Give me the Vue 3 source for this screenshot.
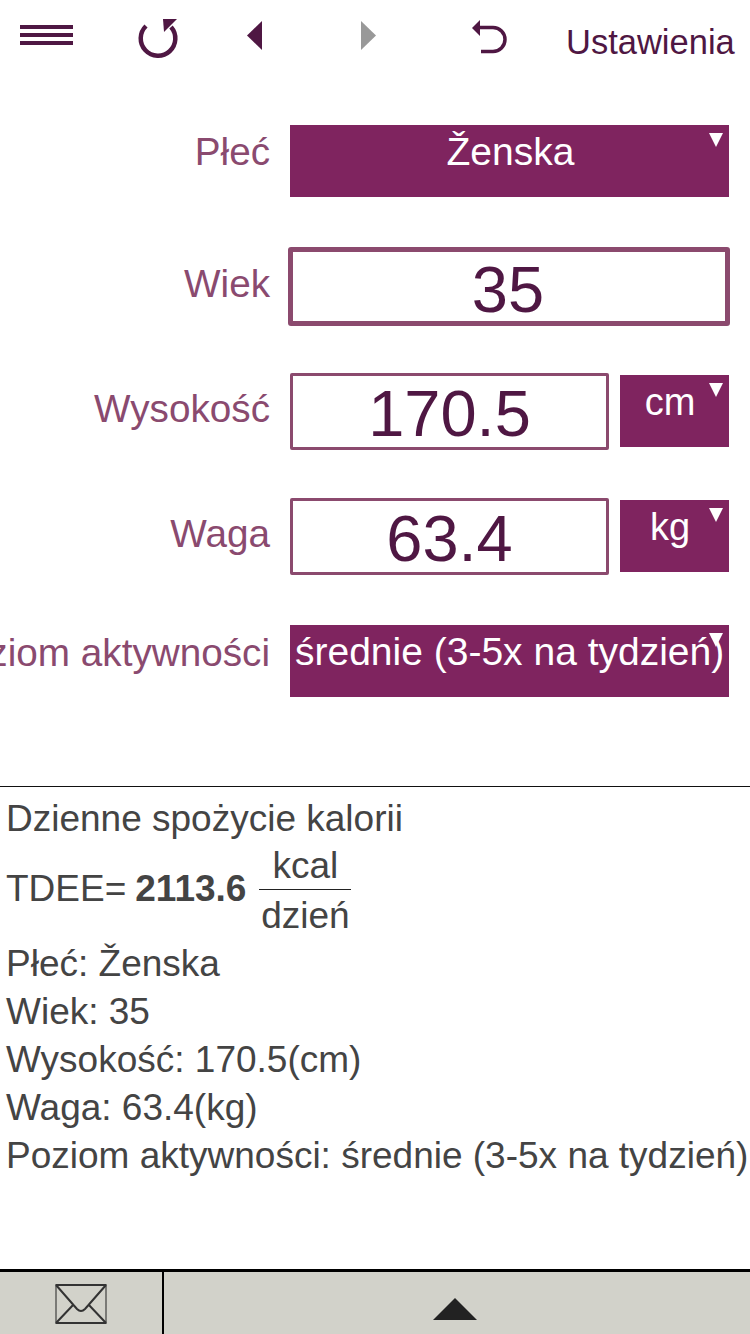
<script setup>
const lines = ['Płeć: Ženska', 'Wiek: 35', 'Wysokość: 170.5(cm)', 'Waga: 63.4(kg)', 'Poziom aktywności: średnie (3-5x na tydzień)']
</script>

<template>
  <div class="page">
    <header class="toolbar">
      <svg class="ic ic-menu" width="53" height="20" viewBox="0 0 53 20" aria-hidden="true">
        <rect y="0" width="53" height="4" /><rect y="8" width="53" height="4" /><rect y="16" width="53" height="4" />
      </svg>
      <svg class="ic ic-reload" width="44" height="44" viewBox="137 17 44 44" aria-hidden="true">
        <path class="line" d="M146 26 A17.3 17.3 0 1 0 171 27" />
        <path class="solid" d="M163 19 H177 L164 32 Z" />
      </svg>
      <svg class="ic ic-prev" width="15" height="29" viewBox="0 0 15 29" aria-hidden="true"><path class="solid" d="M15 0 V29 L0 14.5 Z" /></svg>
      <svg class="ic ic-next" width="15" height="29" viewBox="0 0 15 29" aria-hidden="true"><path class="grey" d="M0 0 V29 L15 14.5 Z" /></svg>
      <svg class="ic ic-undo" width="36" height="36" viewBox="471 18 36 36" aria-hidden="true">
        <path class="line thin" d="M479 27.5 H493 A12 12 0 0 1 493 51.5 H481" />
        <path class="solid" d="M472 28 L480 20 V36 Z" />
      </svg>
      <span class="settings">Ustawienia</span>
    </header>

    <main class="form">
      <div class="row row-sex">
        <label class="label">Płeć</label>
        <div class="select wide sex">Ženska<i class="caret"></i></div>
      </div>
      <div class="row row-age">
        <label class="label">Wiek</label>
        <div class="field focused">35</div>
      </div>
      <div class="row row-height">
        <label class="label">Wysokość</label>
        <div class="field">170.5</div>
        <div class="select unit">cm<i class="caret"></i></div>
      </div>
      <div class="row row-weight">
        <label class="label">Waga</label>
        <div class="field">63.4</div>
        <div class="select unit">kg<i class="caret"></i></div>
      </div>
      <div class="row row-activity">
        <label class="label">Poziom aktywności</label>
        <div class="select wide activity">średnie (3-5x na tydzień)<i class="caret"></i></div>
      </div>
    </main>

    <section class="result">
      <div class="line-item">Dzienne spożycie kalorii</div>
      <div class="tdee">
        <span>TDEE=</span>
        <strong>2113.6</strong>
        <span class="fraction"><span class="num">kcal</span><span class="den">dzień</span></span>
      </div>
      <div v-for="l in lines" :key="l" class="line-item">{{ l }}</div>
    </section>

    <footer class="footer">
      <div class="mail">
        <svg width="52" height="40" viewBox="0 0 52 40" aria-hidden="true">
          <rect x="1" y="1" width="50" height="38" fill="none" stroke="#7a7a76" stroke-width="2" />
          <path d="M1 1 H51 M1 39 H51 M1 1 L22 25 Q26 29 30 25 L51 1 M1 39 L19 20 M51 39 L33 20" fill="none" stroke="#333" stroke-width="2" />
        </svg>
      </div>
      <div class="up">
        <svg width="44" height="22" viewBox="0 0 44 22" aria-hidden="true"><path d="M22 0 L44 22 H0 Z" fill="#222" /></svg>
      </div>
    </footer>
  </div>
</template>

<style>
html, body { margin: 0; background: #fff; overflow: hidden; }
</style>

<style scoped>
.page {
  width: 750px;
  height: 1334px;
  display: flex;
  flex-direction: column;
  overflow: hidden;
  font-family: "Liberation Sans", Arial, sans-serif;
  background: #fff;
}
.toolbar {
  height: 99px;
  flex: none;
  display: flex;
  align-items: flex-start;
}
.ic { display: block; flex: none; }
.ic-menu { margin: 25px 0 0 20px; fill: #4f1743; }
.ic-reload { margin: 17px 0 0 64px; }
.ic-prev { margin: 21px 0 0 66px; }
.ic-next { margin: 21px 0 0 99px; }
.ic-undo { margin: 18px 0 0 95px; }
.line { fill: none; stroke: #4f1743; stroke-width: 4.5; }
.line.thin { stroke-width: 3.5; }
.solid { fill: #4f1743; }
.grey { fill: #999; }
.settings {
  margin: 21px 0 0 59px;
  font-size: 34.5px;
  line-height: 42px;
  color: #4f1743;
  white-space: nowrap;
}

.form { flex: none; padding-top: 26px; }
.row {
  display: flex;
  align-items: center;
  height: 72px;
}
.row-age { height: 79px; margin-top: 50px; }
.row-height { height: 77px; margin-top: 47px; }
.row-weight { height: 77px; margin-top: 48px; }
.row-activity { height: 72px; margin-top: 50px; }

.label {
  flex: none;
  width: 270px;
  margin-right: 20px;
  display: flex;
  justify-content: flex-end;
  white-space: nowrap;
  font-size: 38.7px;
  line-height: 44px;
  color: #8a4a6f;
}
.row-sex .label { margin-top: -18px; }
.row-age .label { margin-top: -6px; }
.row-height .label { margin-top: -6px; }
.row-weight .label { margin-top: -5px; }
.row-activity .label { margin-top: -16px; }

.select {
  position: relative;
  box-sizing: border-box;
  height: 72px;
  flex: none;
  background: #7f245f;
  color: #fff;
  font-size: 39px;
  line-height: 54px;
  text-align: center;
  white-space: nowrap;
}
.wide { width: 439px; }
.sex { padding-left: 2px; }
.unit { width: 109px; margin: -2px 0 0 11px; padding-right: 9px; font-size: 38px; }
.activity { text-align: left; padding-left: 5px; }
.caret {
  position: absolute;
  top: 8px;
  right: 6px;
  width: 0;
  height: 0;
  border-left: 7.5px solid transparent;
  border-right: 7.5px solid transparent;
  border-top: 14px solid #fff;
}

.field {
  box-sizing: border-box;
  flex: none;
  width: 319px;
  height: 77px;
  border: 3px solid #8b4a6e;
  border-radius: 2px;
  color: #4f1743;
  font-size: 65px;
  line-height: 76px;
  text-align: center;
}
.field.focused {
  width: 442px;
  height: 79px;
  margin-left: -2px;
  padding-right: 2px;
  border-width: 5px;
  border-radius: 3px;
  line-height: 76px;
}

.result {
  margin-top: 89px;
  border-top: 1px solid #111;
  padding: 8px 0 0 6px;
  color: #444;
  font-size: 37px;
}
.line-item { height: 48px; line-height: 48px; white-space: nowrap; }
.tdee {
  height: 97px;
  display: flex;
  align-items: center;
  white-space: nowrap;
}
.tdee > span:first-child, .tdee strong { margin-top: -5px; }
.tdee strong { margin-left: 9px; font-weight: 700; }
.fraction {
  display: flex;
  flex-direction: column;
  align-items: center;
  margin-left: 13px;
  width: 92px;
}
.num { line-height: 46px; height: 46px; border-bottom: 1px solid #222; width: 100%; text-align: center; }
.den { line-height: 52px; height: 51px; }

.footer {
  margin-top: auto;
  height: 65px;
  flex: none;
  display: flex;
  box-sizing: border-box;
  border-top: 3px solid #000;
  background: #d2d2ca;
}
.mail {
  box-sizing: border-box;
  width: 164px;
  flex: none;
  border-right: 2px solid #000;
  padding: 12px 0 0 55px;
}
.mail svg, .up svg { display: block; }
.up {
  padding: 26px 0 0 269px;
}
</style>
